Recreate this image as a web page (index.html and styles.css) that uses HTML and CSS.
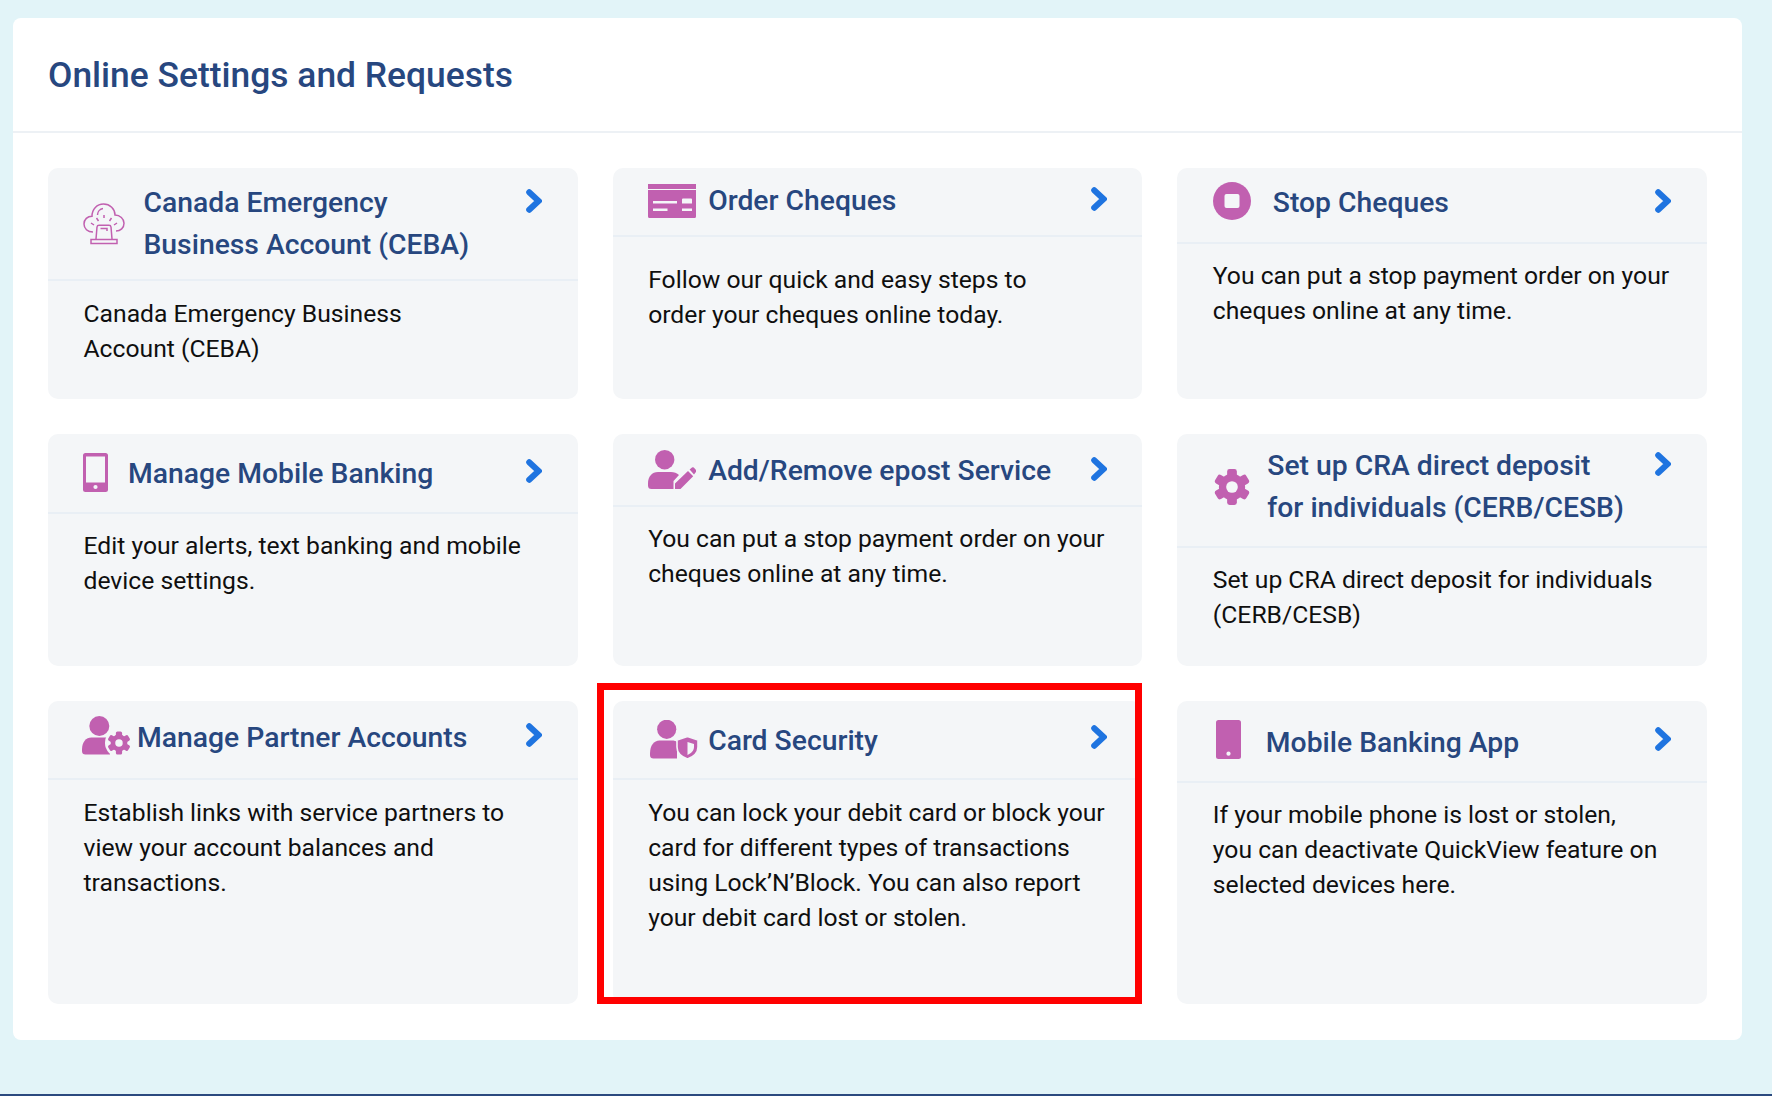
FILE: index.html
```html
<!DOCTYPE html>
<html lang="en">
<head>
<meta charset="utf-8">
<title>Online Settings and Requests</title>
<link rel="stylesheet" href="styles.css">
</head>
<body>
<svg class="defs" width="0" height="0" aria-hidden="true">
  <symbol id="chev" viewBox="0 0 16 24"><path d="M3.2 3.2 L12.6 12 L3.2 20.8" fill="none" stroke="#1f74e0" stroke-width="6" stroke-linecap="round" stroke-linejoin="miter"/></symbol>
  <symbol id="gear" viewBox="-18.5 -18.5 37 37" overflow="visible">
    <circle r="13.5"/>
    <rect x="-5" y="-18.5" width="10" height="37" rx="2.5"/>
    <rect x="-5" y="-18.5" width="10" height="37" rx="2.5" transform="rotate(60)"/>
    <rect x="-5" y="-18.5" width="10" height="37" rx="2.5" transform="rotate(120)"/>
    <circle class="hole" r="6"/>
  </symbol>
</svg>
<main class="panel">
  <header class="panel-head"><h1>Online Settings and Requests</h1></header>
  <div class="grid">

    <a class="card c1">
      <div class="head">
        <svg class="ic outline" width="42" height="42" viewBox="0 0 42 42"><path d="M10 29C4.5 29 1 25.5 1 21C1 16.5 4.5 13.2 9 13.2C9 6 14 1 20.5 1C27 1 32 6 32 12C37 12 41 16 41 20.2C41 25 37.5 28 33 28M14.5 12C14.5 8.5 17 6 20 5.5M21 12V15M13.5 15L15.5 18M28.5 15L26.5 18M8 20L11 22M34 20L31 22M13 36L14 24Q14.2 22.3 16 22.3H26Q27.8 22.3 28 24L29 36M17.5 25.5H24V28M8 36.5H34V40.5H8Z"/></svg>
        <h2>Canada Emergency<br>Business Account (CEBA)</h2>
        <svg class="chev"><use href="#chev"/></svg>
      </div>
      <p>Canada Emergency Business<br>Account (CEBA)</p>
    </a>

    <a class="card c2">
      <div class="head">
        <svg class="ic" width="48" height="34" viewBox="0 0 48 34"><path d="M0 0H48V5H0ZM0 6H48V32.5Q48 34 46.5 34H1.5Q0 34 0 32.5Z"/><path class="hole" d="M5 17H29V19.4H5ZM34 15.5Q34 14.5 35 14.5H43Q44 14.5 44 15.5V19.4H34ZM5 24.6H19.5V27H5ZM34 24.6H44V27H34Z"/></svg>
        <h2>Order Cheques</h2>
        <svg class="chev"><use href="#chev"/></svg>
      </div>
      <p>Follow our quick and easy steps to<br>order your cheques online today.</p>
    </a>

    <a class="card c3">
      <div class="head">
        <svg class="ic" width="38" height="38" viewBox="0 0 38 38"><circle cx="19" cy="19" r="19"/><rect class="hole" x="11.5" y="12" width="15" height="14" rx="2"/></svg>
        <h2>Stop Cheques</h2>
        <svg class="chev"><use href="#chev"/></svg>
      </div>
      <p>You can put a stop payment order on your<br>cheques online at any time.</p>
    </a>

    <a class="card c4">
      <div class="head">
        <svg class="ic" width="25" height="39" viewBox="0 0 25 39"><path fill-rule="evenodd" d="M2.5 0H22.5Q25 0 25 2.5V36.5Q25 39 22.5 39H2.5Q0 39 0 36.5V2.5Q0 0 2.5 0ZM3 3.5V29.5H22V3.5Z"/><circle class="hole" cx="12.5" cy="34" r="2.1"/></svg>
        <h2>Manage Mobile Banking</h2>
        <svg class="chev"><use href="#chev"/></svg>
      </div>
      <p>Edit your alerts, text banking and mobile<br>device settings.</p>
    </a>

    <a class="card c5">
      <div class="head">
        <svg class="ic" width="48" height="39" viewBox="0 0 48 39"><circle cx="16.7" cy="9.7" r="9.7"/><path d="M0 33.5C0 26.5 4 22 10 22H23C26 22 29 23 31 25L25.5 31V39H3.5Q0 39 0 35.5Z"/><path d="M27 39V33.5L40 21L45.2 26.2L32.5 39ZM41.6 19.4L44 17.4Q45 16.8 45.8 17.6L48 20Q48.6 21 47.9 22L46 24.4Z"/></svg>
        <h2>Add/Remove epost Service</h2>
        <svg class="chev"><use href="#chev"/></svg>
      </div>
      <p>You can put a stop payment order on your<br>cheques online at any time.</p>
    </a>

    <a class="card c6">
      <div class="head">
        <svg class="ic" width="36" height="38"><use href="#gear"/></svg>
        <h2>Set up CRA direct deposit<br>for individuals (CERB/CESB)</h2>
        <svg class="chev"><use href="#chev"/></svg>
      </div>
      <p>Set up CRA direct deposit for individuals<br>(CERB/CESB)</p>
    </a>

    <a class="card c7">
      <div class="head">
        <svg class="ic" width="49" height="39" viewBox="0 0 49 39"><circle cx="17.3" cy="10" r="10"/><path d="M0 33.5C0 26 4 21.5 9.5 21.5H22C24.5 21.5 26.5 22 28 23V38.5H3.5Q0 38.5 0 35Z"/><circle class="halo" cx="37" cy="27" r="14"/><use href="#gear" x="25.5" y="15.5" width="23" height="23"/></svg>
        <h2>Manage Partner Accounts</h2>
        <svg class="chev"><use href="#chev"/></svg>
      </div>
      <p>Establish links with service partners to<br>view your account balances and<br>transactions.</p>
    </a>

    <a class="card c8">
      <div class="mark"></div>
      <div class="head">
        <svg class="ic" width="48" height="39" viewBox="0 0 48 39"><circle cx="16.7" cy="9.3" r="9.6"/><path d="M0 33.5C0 25.5 4 20.5 9.5 20.5H21.5C24.5 20.5 26 21 27 22V38.5H3.5Q0 38.5 0 35Z"/><path class="shield" d="M37.5 16.5L48 20V27C48 33 43 37 37.5 39C32 37 27 33 27 27V20Z"/><path class="hole" d="M37.5 22L44 24V27C44 30.5 41 33.5 37.5 35Z"/></svg>
        <h2>Card Security</h2>
        <svg class="chev"><use href="#chev"/></svg>
      </div>
      <p>You can lock your debit card or block your<br>card for different types of transactions<br>using Lock’N’Block. You can also report<br>your debit card lost or stolen.</p>
    </a>

    <a class="card c9">
      <div class="head">
        <svg class="ic" width="25" height="39" viewBox="0 0 25 39"><rect width="25" height="39" rx="2.5"/><circle class="hole" cx="12.5" cy="33.7" r="2.1"/></svg>
        <h2>Mobile Banking App</h2>
        <svg class="chev"><use href="#chev"/></svg>
      </div>
      <p>If your mobile phone is lost or stolen,<br>you can deactivate QuickView feature on<br>selected devices here.</p>
    </a>

  </div>
</main>
<div class="spacer"></div>
<footer class="foot"></footer>
</body>
</html>
```
FILE: styles.css
```css
* { box-sizing: border-box; }
html, body { margin: 0; height: 1096px; overflow: hidden; }
body {
  display: flex;
  flex-direction: column;
  background: #e2f4f8;
  font-family: Roboto, "Liberation Sans", sans-serif;
  color: #0f0f0f;
}
.defs { position: absolute; }
.panel {
  width: 1729px;
  height: 1022px;
  margin: 18px 0 0 13px;
  background: #fff;
  border-radius: 8px;
}
.panel-head {
  height: 115px;
  padding: 36px 35px 0;
  border-bottom: 2px solid #edf1f5;
}
h1 {
  margin: 0;
  font-size: 35.4px;
  font-weight: 500;
  line-height: 42px;
  color: #27477f;
}
.grid {
  display: grid;
  grid-template-columns: repeat(3, 1fr);
  grid-template-rows: 231px 232px 303px;
  column-gap: 35px;
  row-gap: 35px;
  padding: 35px;
}
.card {
  position: relative;
  display: block;
  background: #f4f6f8;
  border-radius: 10px;
}
.head {
  display: flex;
  align-items: flex-start;
  height: var(--h);
  padding: 0 var(--pr, 36px) 0 var(--pad);
  border-bottom: 2px solid #e9eff5;
}
.ic {
  flex: none;
  margin-top: var(--it);
  margin-right: var(--gap);
  fill: #c160b0;
}
.ic.outline { fill: none; stroke: #c160b0; stroke-width: 1.5; }
.hole, .halo { fill: #f4f6f8; }
.shield { stroke: #f4f6f8; stroke-width: 1.6; }
h2 {
  margin: var(--tt) 0 0;
  font-size: 28.3px;
  font-weight: 500;
  line-height: 42.3px;
  color: #27477f;
  white-space: nowrap;
}
.chev {
  flex: none;
  width: 16px;
  height: 24px;
  margin-top: var(--ct);
  margin-left: auto;
}
.card p {
  margin: 0;
  padding: var(--bt, 14px) 20px 0 35.5px;
  font-size: 24.7px;
  line-height: 35.1px;
  white-space: nowrap;
}
.mark {
  position: absolute;
  left: -16px;
  top: -18px;
  right: 0;
  bottom: 0;
  border: 7px solid #ff0000;
}
.spacer { flex: 1; }
.foot { height: 2px; background: #2b4a7f; }

.c1 { --h: 113px; --pad: 35px; --it: 35px; --gap: 18.5px; --tt: 14px; --ct: 21px; --bt: 14.5px; }
.c2 { --h: 69px; --pad: 35px; --pr: 35px; --it: 16px; --gap: 12.5px; --tt: 12px; --ct: 19px; --bt: 25px; }
.c3 { --h: 76px; --pad: 36px; --it: 14px; --gap: 21.5px; --tt: 14px; --ct: 21px; }
.c4 { --h: 80px; --pad: 35px; --it: 19px; --gap: 20px; --tt: 19px; --ct: 25px; }
.c5 { --h: 73px; --pad: 35px; --pr: 35px; --it: 16px; --gap: 12.5px; --tt: 16px; --ct: 23px; }
.c6 { --h: 114px; --pad: 37px; --it: 34px; --gap: 17px; --tt: 11px; --ct: 18px; }
.c7 { --h: 79px; --pad: 34px; --it: 15px; --gap: 6px; --tt: 16px; --ct: 22px; --bt: 15px; }
.c8 { --h: 79px; --pad: 37px; --pr: 35px; --it: 19px; --gap: 10.5px; --tt: 19px; --ct: 24px; --bt: 15px; }
.c9 { --h: 82px; --pad: 39px; --it: 19px; --gap: 24.5px; --tt: 21px; --ct: 26px; --bt: 14px; }
```
